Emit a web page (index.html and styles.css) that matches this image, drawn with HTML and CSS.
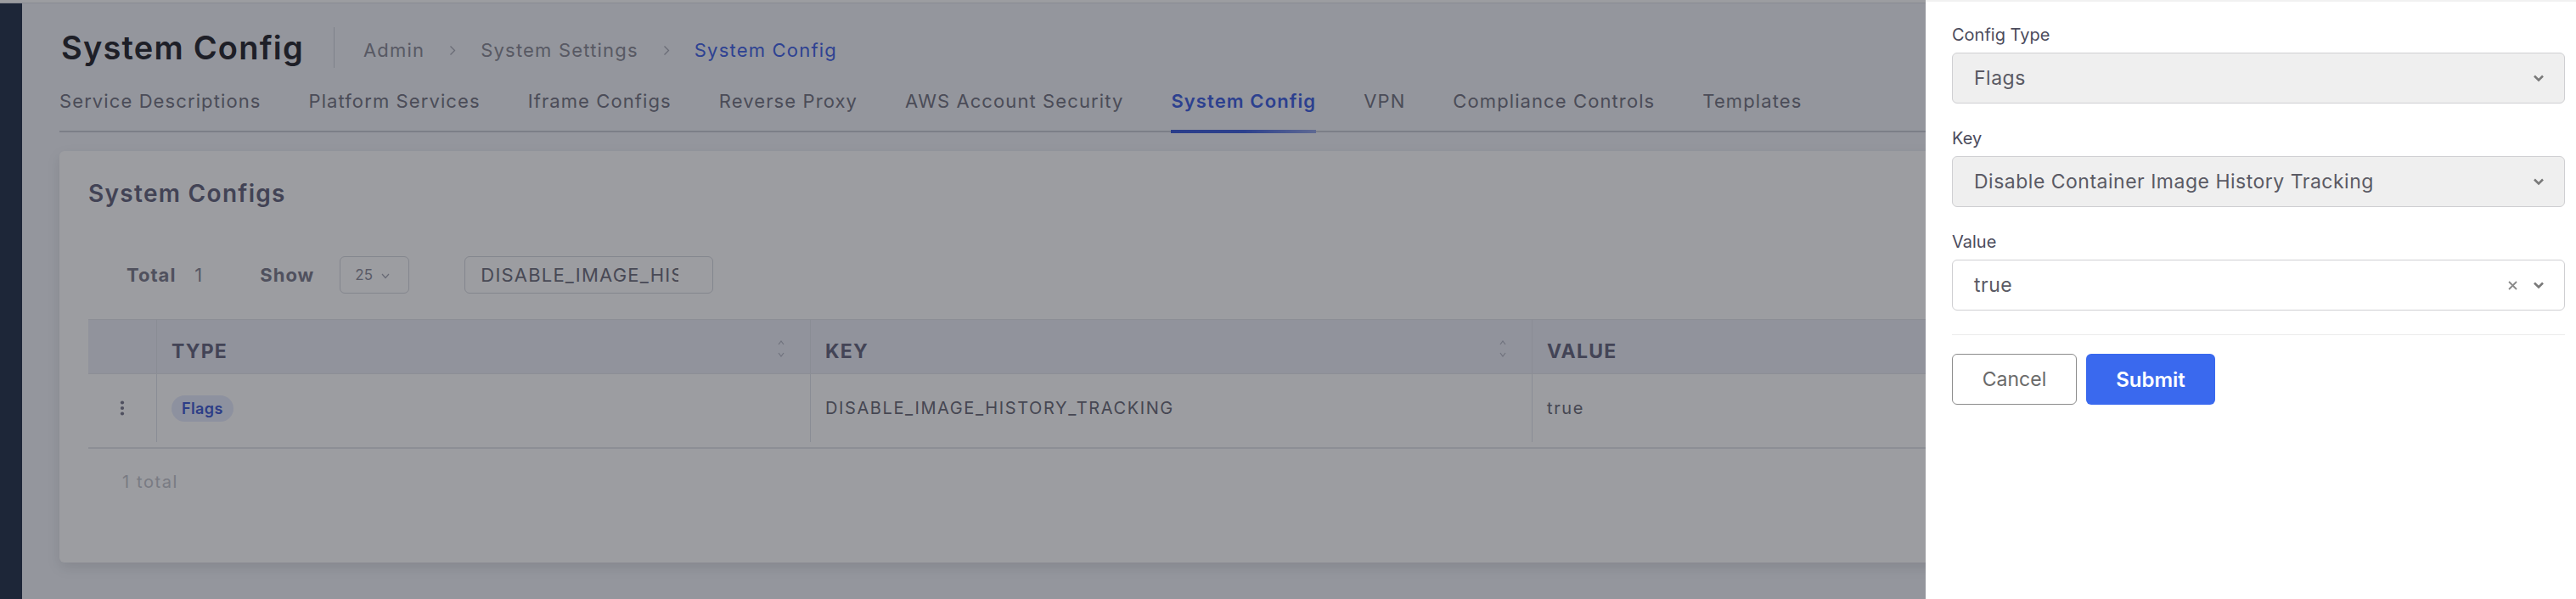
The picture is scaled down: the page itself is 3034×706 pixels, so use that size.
FILE: index.html
```html
<!doctype html>
<html lang="en">
<head>
<meta charset="utf-8">
<title>System Config</title>
<link rel="stylesheet" href="styles.css">
</head>
<body>
<div class="topbar"></div>
<div class="shell">
  <aside class="sidebar"></aside>
  <main class="main">
    <header class="page-head">
      <h1 class="page-title">System Config</h1>
      <span class="vdivider"></span>
      <nav class="crumbs">
        <span class="crumb">Admin</span>
        <svg class="crumb-sep" width="8" height="13" viewBox="0 0 8 13"><polyline points="1.5,1.5 6.5,6.5 1.5,11.5" fill="none" stroke="currentColor" stroke-width="1.3"/></svg>
        <span class="crumb">System Settings</span>
        <svg class="crumb-sep" width="8" height="13" viewBox="0 0 8 13"><polyline points="1.5,1.5 6.5,6.5 1.5,11.5" fill="none" stroke="currentColor" stroke-width="1.3"/></svg>
        <span class="crumb crumb-current">System Config</span>
      </nav>
    </header>

    <nav class="tabs">
      <span class="tab">Service Descriptions</span>
      <span class="tab">Platform Services</span>
      <span class="tab">Iframe Configs</span>
      <span class="tab">Reverse Proxy</span>
      <span class="tab">AWS Account Security</span>
      <span class="tab tab-active">System Config</span>
      <span class="tab">VPN</span>
      <span class="tab">Compliance Controls</span>
      <span class="tab">Templates</span>
    </nav>

    <section class="card">
      <h2 class="card-title">System Configs</h2>
      <div class="toolbar">
        <span class="tb-label">Total</span>
        <span class="tb-count">1</span>
        <span class="tb-label tb-show">Show</span>
        <div class="page-size">
          <span>25</span>
          <svg width="10" height="7" viewBox="0 0 10 7"><polyline points="1,1 5,5.5 9,1" fill="none" stroke="currentColor" stroke-width="1.2"/></svg>
        </div>
        <input class="search" type="text" value="DISABLE_IMAGE_HISTORY_TRACKING" readonly>
      </div>

      <div class="table">
        <div class="row thead">
          <div class="cell c-act"></div>
          <div class="cell c-sort">
            <span>TYPE</span>
            <svg class="sort" width="10" height="22" viewBox="0 0 10 22"><polyline points="2,6 5,2 8,6" fill="none" stroke="currentColor" stroke-width="1.2"/><polyline points="2,16 5,20 8,16" fill="none" stroke="currentColor" stroke-width="1.2"/></svg>
          </div>
          <div class="cell c-sort">
            <span>KEY</span>
            <svg class="sort" width="10" height="22" viewBox="0 0 10 22"><polyline points="2,6 5,2 8,6" fill="none" stroke="currentColor" stroke-width="1.2"/><polyline points="2,16 5,20 8,16" fill="none" stroke="currentColor" stroke-width="1.2"/></svg>
          </div>
          <div class="cell"><span>VALUE</span></div>
        </div>
        <div class="row tbody">
          <div class="cell c-act">
            <svg width="6" height="18" viewBox="0 0 6 18"><circle cx="3" cy="2.5" r="2.1" fill="currentColor"/><circle cx="3" cy="9" r="2.1" fill="currentColor"/><circle cx="3" cy="15.5" r="2.1" fill="currentColor"/></svg>
          </div>
          <div class="cell"><span class="badge">Flags</span></div>
          <div class="cell">DISABLE_IMAGE_HISTORY_TRACKING</div>
          <div class="cell">true</div>
        </div>
      </div>
      <div class="table-foot">1 total</div>
    </section>
  </main>
</div>

<div class="backdrop"></div>

<aside class="drawer">
  <div class="field">
    <label class="field-label">Config Type</label>
    <div class="select select-disabled">
      <span class="select-value">Flags</span>
      <span class="select-icons">
        <svg width="14" height="10" viewBox="0 0 14 10"><polyline points="2,2.5 7,7.5 12,2.5" fill="none" stroke="currentColor" stroke-width="2.6"/></svg>
      </span>
    </div>
  </div>
  <div class="field">
    <label class="field-label">Key</label>
    <div class="select select-disabled">
      <span class="select-value">Disable Container Image History Tracking</span>
      <span class="select-icons">
        <svg width="14" height="10" viewBox="0 0 14 10"><polyline points="2,2.5 7,7.5 12,2.5" fill="none" stroke="currentColor" stroke-width="2.6"/></svg>
      </span>
    </div>
  </div>
  <div class="field">
    <label class="field-label">Value</label>
    <div class="select">
      <span class="select-value">true</span>
      <span class="select-icons">
        <svg class="clear" width="13" height="11" viewBox="0 0 13 11"><path d="M2 1 L11 10 M11 1 L2 10" fill="none" stroke="currentColor" stroke-width="1.8"/></svg>
        <svg width="14" height="10" viewBox="0 0 14 10"><polyline points="2,2.5 7,7.5 12,2.5" fill="none" stroke="currentColor" stroke-width="2.6"/></svg>
      </span>
    </div>
  </div>
  <div class="drawer-actions">
    <button class="btn btn-cancel" type="button">Cancel</button>
    <button class="btn btn-submit" type="button">Submit</button>
  </div>
</aside>
</body>
</html>
```

FILE: styles.css
```css
* { box-sizing: border-box; }

html, body {
  margin: 0;
  width: 3034px;
  height: 706px;
  overflow: hidden;
}

body {
  font-family: "Inter", "Noto Sans", sans-serif;
  background: #f1f3f8;
  color: #2e2e36;
}

.topbar {
  height: 4px;
  background: #ffffff;
  border-bottom: 1px solid #dfe1e7;
}

.shell {
  display: flex;
  height: 702px;
}

.sidebar {
  width: 26px;
  flex: none;
  background: #25324b;
}

.main {
  flex: 1;
  padding: 28px 44px 0 44px;
  min-width: 0;
}

/* header */
.page-head {
  display: flex;
  align-items: center;
  height: 48px;
}

.page-title {
  margin: 0 0 0 2px;
  font-size: 38px;
  line-height: 48px;
  font-weight: 600;
  letter-spacing: 1.2px;
  color: #26262d;
}

.vdivider {
  width: 1px;
  height: 48px;
  background: #cdd0d8;
  margin: 0 34px 0 35px;
}

.crumbs {
  display: flex;
  align-items: center;
  gap: 29px;
  padding-top: 6px;
  font-size: 22px;
  line-height: 27px;
  letter-spacing: 1.2px;
  color: #8a8a95;
}

.crumb-sep { color: #a9abb5; }

.crumb-current { color: #4262e6; }

/* tabs */
.tabs {
  display: flex;
  gap: 56px;
  margin-top: 26px;
  border-bottom: 2px solid #c9ccd4;
}

.tab {
  font-size: 22px;
  line-height: 27px;
  letter-spacing: 1.1px;
  color: #747481;
  padding-bottom: 24px;
  margin-bottom: -3px;
  white-space: nowrap;
}

.tab-active {
  color: #3f5fe0;
  font-weight: 600;
  background: linear-gradient(90deg, #3c5bd8 0%, #3f5fdc 50%, #95a6e6 100%) left bottom / 100% 4px no-repeat;
}

/* card */
.card {
  margin-top: 22px;
  background: #ffffff;
  border-radius: 6px;
  box-shadow: 0 6px 16px rgba(0, 0, 0, 0.10);
  padding: 33px 34px 0 34px;
}

.card-title {
  margin: 0;
  font-size: 28px;
  line-height: 34px;
  font-weight: 600;
  letter-spacing: 1.3px;
  color: #64647c;
}

.toolbar {
  display: flex;
  align-items: center;
  height: 44px;
  margin-top: 57px;
  margin-left: 45px;
}

.tb-label {
  font-size: 22px;
  font-weight: 700;
  letter-spacing: 1px;
  color: #7c7c8c;
}

.tb-count {
  margin-left: 22px;
  font-size: 22px;
  color: #8a8a98;
}

.tb-show { margin-left: 68px; }

.page-size {
  margin-left: 30px;
  width: 82px;
  height: 44px;
  border: 1px solid #d5d7de;
  border-radius: 6px;
  display: flex;
  align-items: center;
  gap: 10px;
  padding-left: 17px;
  font-size: 17px;
  color: #8e8e9c;
}

.page-size svg { color: #a5a7b3; margin-top: 2px; }

.search {
  margin-left: 65px;
  width: 293px;
  height: 44px;
  border: 1px solid #d5d7de;
  border-radius: 6px;
  padding: 0 40px 0 18px;
  background: transparent;
  outline: none;
  font-family: "Inter", "Noto Sans", sans-serif;
  font-size: 22px;
  letter-spacing: 1.2px;
  color: #6e6e7c;
}

/* table */
.table {
  margin-top: 30px;
  border-top: 1px solid #e3e5eb;
}

.row {
  display: grid;
  grid-template-columns: 80px 770px 850px 1fr;
}

.thead {
  height: 64px;
  background: #eceef6;
  border-bottom: 1px solid #e3e5eb;
}

.cell {
  display: flex;
  align-items: center;
  padding-left: 17px;
  border-left: 1px solid #e1e3ea;
}

.cell.c-act {
  border-left: 0;
  padding-left: 0;
  justify-content: center;
  color: #7a7a8e;
}

.thead .cell {
  padding-top: 10px;
  font-size: 23px;
  font-weight: 700;
  letter-spacing: 1.2px;
  color: #67677f;
}

.c-sort {
  justify-content: space-between;
  padding-right: 29px;
}

.sort {
  color: #b3b5c2;
  margin-top: -6px;
}

.tbody {
  height: 80px;
  font-size: 20px;
  letter-spacing: 1.6px;
  color: #6b6b78;
}

.badge {
  display: inline-flex;
  align-items: center;
  height: 31px;
  padding: 0 12px;
  border-radius: 16px;
  background: #e6ebfb;
  color: #3f5bd2;
  font-size: 18px;
  font-weight: 600;
  letter-spacing: 0.4px;
}

.table-foot {
  margin-top: 6px;
  border-top: 2px solid #e3e5eb;
  padding: 27px 0 83px 40px;
  font-size: 20px;
  line-height: 24px;
  letter-spacing: 1.6px;
  color: #c3c5cc;
}

/* overlay + drawer */
.backdrop {
  position: fixed;
  inset: 0;
  background: rgba(20, 22, 30, 0.42);
}

.drawer {
  position: fixed;
  top: 0;
  right: 0;
  width: 766px;
  height: 706px;
  background: #ffffff;
  border-top: 2px solid #f1f1f1;
  padding: 27px 13px 0 31px;
  display: flex;
  flex-direction: column;
}

.field {
  display: flex;
  flex-direction: column;
  margin-bottom: 29px;
}

.field-label {
  font-size: 20px;
  line-height: 24px;
  color: #4b4b5c;
  margin-bottom: 9px;
}

.select {
  height: 60px;
  border: 1px solid #cfcfd2;
  border-radius: 6px;
  background: #ffffff;
  display: flex;
  align-items: center;
  justify-content: space-between;
  padding: 0 23px 0 25px;
}

.select-disabled { background: #efefef; }

.select-value {
  font-size: 23px;
  letter-spacing: 0.5px;
  color: #5a5a64;
}

.select-icons {
  display: flex;
  align-items: center;
  gap: 17px;
  color: #7a7a7a;
}

.select-icons .clear { color: #8a8a8a; }

.drawer-actions {
  border-top: 1px solid #ececec;
  margin-top: -1px;
  padding-top: 22px;
  display: flex;
  gap: 11px;
}

.btn {
  height: 60px;
  border-radius: 6px;
  font-family: "Inter", "Noto Sans", sans-serif;
  cursor: pointer;
}

.btn-cancel {
  width: 147px;
  border: 1px solid #8c8c8c;
  background: #ffffff;
  color: #6a6a6a;
  font-size: 23px;
}

.btn-submit {
  width: 152px;
  border: 0;
  background: #3a69ee;
  color: #ffffff;
  font-size: 24px;
  font-weight: 600;
}
```
